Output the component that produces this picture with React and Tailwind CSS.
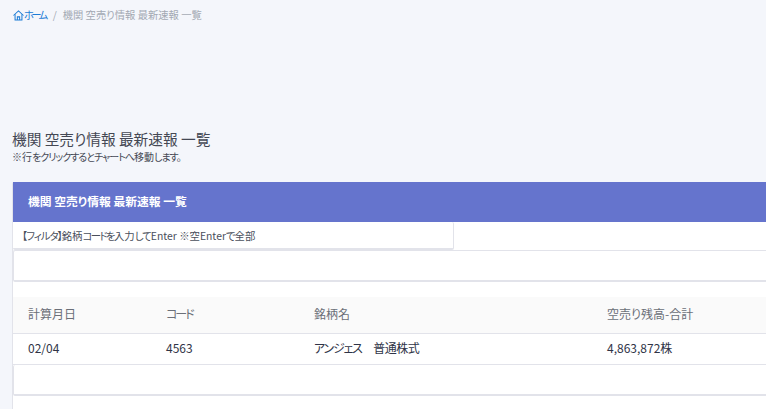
import React from 'react';

const fontStack = { fontFamily: '"Noto Sans CJK JP", "Open Sans", sans-serif', fontFeatureSettings: '"palt"' };

const Breadcrumb = () => (
  <div className="flex h-[30px] items-center pl-[13px] text-[10.3px] leading-none">
    <svg className="h-[11px] w-[11px] text-[#1c7cd6]" viewBox="0 0 24 24" fill="none" stroke="currentColor" strokeWidth="2.2">
      <path d="M1 12 12 2l11 10" />
      <path d="M4.5 9.5V22h15V9.5" />
      <path d="M9.5 22v-7h5v7" />
    </svg>
    <span className="tracking-[-2.6px] text-[#1c7cd6]">ホーム</span>
    <span className="mr-[6px] ml-[7px] text-[#a3a9b3]">/</span>
    <span className="text-[#a3a9b3]">機関 空売り情報 最新速報 一覧</span>
  </div>
);

const App = () => {
  return (
    <div className="h-[409px] w-[766px] overflow-hidden bg-[#f4f6fb] text-[#2f3447]" style={fontStack}>
      <Breadcrumb />

      {/* タイトル */}
      <div className="mt-[99px] pl-[12px]">
        <h1 className="text-[14.7px] leading-[20px] font-normal text-[#444854]">機関 空売り情報 最新速報 一覧</h1>
        <p className="mt-[2px] text-[10px] leading-[12px] text-[#444854]">
          ※行<span className="tracking-[-1px]">をクリックするとチャートへ</span>移動<span className="tracking-[-1px]">します。</span>
        </p>
      </div>

      {/* カード */}
      <div className="mt-[19px] ml-[12px] h-[240px] w-[800px] rounded-t-[2px] border-l border-[#e2e3ea] bg-white">
        <div className="flex h-[40px] items-center bg-[#6574cd] pb-[2px] pl-[15px] text-[11.8px] font-bold text-white">
          機関 空売り情報 最新速報 一覧
        </div>
        <div className="h-[28px] w-[441px] rounded-[2px] border-r border-b-2 border-[#e2e3ea] pl-[9px] text-[10.4px] leading-[27px] text-[#4a4f5c]">
          <span className="tracking-[-1px]">【フィルタ】</span>銘柄<span className="tracking-[-1.6px]">コードを</span>入力<span className="tracking-[-1px]">して</span>Enter ※空Enter<span className="tracking-[-1px]">で</span>全部
        </div>
        <div className="h-[32px] rounded-[2px] border-t border-b-2 border-l border-[#e2e3ea]" />
        <div className="h-[15px]" />
        <div className="grid h-[37px] grid-cols-[138px_148px_293px_1fr] items-center border-b border-[#e2e3ea] bg-[#fafafa] pb-[2px] pl-[15px] text-[12px] text-[#6b6f78]">
          <span>計算月日</span>
          <span className="tracking-[-2px]">コード</span>
          <span>銘柄名</span>
          <span>空売り残高-合計</span>
        </div>
        <div className="grid h-[31px] grid-cols-[138px_148px_293px_1fr] items-center border-b border-[#e2e3ea] pb-[2px] pl-[15px] text-[12px] text-[#2f3447]">
          <span>02/04</span>
          <span>4563</span>
          <span>
            <span className="tracking-[-1.2px]">アンジェス</span>
            <span className="tracking-[-0.5px]">　普通株式</span>
          </span>
          <span>4,863,872株</span>
        </div>
        <div className="h-[31px] rounded-[2px] border-b-2 border-l border-[#e2e3ea]" />
      </div>
    </div>
  );
};

export default App;
